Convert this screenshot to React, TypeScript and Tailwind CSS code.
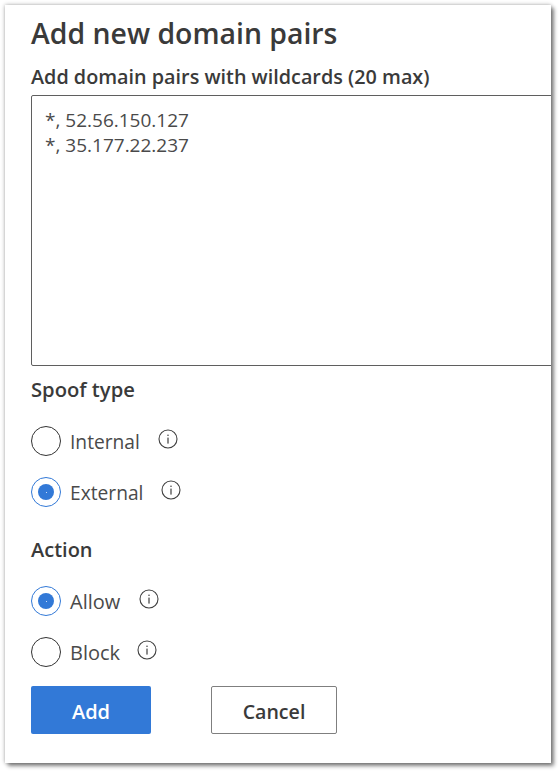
import React from "react";

function Info() {
  return (
    <svg width="20" height="20" viewBox="0 0 20 20" fill="none" className="shrink-0">
      <circle cx="10" cy="10" r="9" stroke="#404040" strokeWidth="1.1" />
      <rect x="9.4" y="8.6" width="1.2" height="6" fill="#404040" />
      <rect x="9.4" y="5.6" width="1.2" height="1.4" fill="#404040" />
    </svg>
  );
}

function Radio({ label, checked, gap, text }: { label: string; checked?: boolean; gap: string; text: string }) {
  return (
    <div className="flex items-center h-[30px]">
      <span
        className={
          "w-[30px] h-[30px] rounded-full border flex items-center justify-center shrink-0 " +
          (checked ? "border-[#3279d7]" : "border-[#333333]")
        }
      >
        {checked && (
          <span className="w-[16px] h-[16px] rounded-full bg-[#3279d7] flex items-center justify-center">
            <span className="w-[1px] h-[1px] rounded-full bg-white" />
          </span>
        )}
      </span>
      <span className={"ml-[9px] pt-[1px] leading-[30px] text-[#4a4a4a] " + text}>{label}</span>
      <span className={"-mt-[4px] " + gap}>
        <Info />
      </span>
    </div>
  );
}

export default function App() {
  return (
    <div className="w-[560px] h-[772px] bg-white pt-[5px] pl-[5px] font-['Open_Sans','Noto_Sans',sans-serif]">
      <div className="w-[546px] h-[758px] bg-white overflow-hidden shadow-[0_0_4px_rgba(0,0,0,0.35),3px_3px_4px_rgba(0,0,0,0.45)] pl-[26px] flex flex-col">
        <h1 className="mt-[9px] text-[28.4px] leading-[38px] font-semibold text-[#3a3a3a]">Add new domain pairs</h1>
        <div className="mt-[11px] text-[19.8px] leading-[27px] font-semibold text-[#3a3a3a]">Add domain pairs with wildcards (20 max)</div>
        <div className="mt-[5px] w-[560px] h-[271px] shrink-0 border border-[#5f5f5f] rounded-[2px] pl-[13px] pt-[12px] text-[19px] leading-[25px] text-[#4a4a4a]">
          <div>*, 52.56.150.127</div>
          <div>*, 35.177.22.237</div>
        </div>
        <div className="mt-[10px] text-[20.2px] leading-[27px] font-semibold text-[#3a3a3a]">Spoof type</div>
        <div className="mt-[23px] flex flex-col gap-[21px]">
          <Radio label="Internal" text="text-[19.2px]" gap="ml-[18px]" />
          <Radio label="External" text="text-[19.2px]" checked gap="ml-[18px]" />
        </div>
        <div className="mt-[29px] text-[20px] leading-[27px] font-semibold text-[#3a3a3a]">Action</div>
        <div className="mt-[23px] flex flex-col gap-[21px]">
          <Radio label="Allow" text="text-[20px]" checked gap="ml-[19px]" />
          <Radio label="Block" text="text-[20px]" gap="ml-[17px]" />
        </div>
        <div className="mt-[19px] flex gap-[60px]">
          <button className="w-[120px] h-[48px] pt-[3px] rounded-[2px] bg-[#3279d7] text-white text-[20px] font-semibold">Add</button>
          <button className="w-[126px] h-[48px] pt-[3px] rounded-[2px] border border-[#7f7f7f] bg-white text-[#3a3a3a] text-[19.6px] font-semibold">Cancel</button>
        </div>
      </div>
    </div>
  );
}
